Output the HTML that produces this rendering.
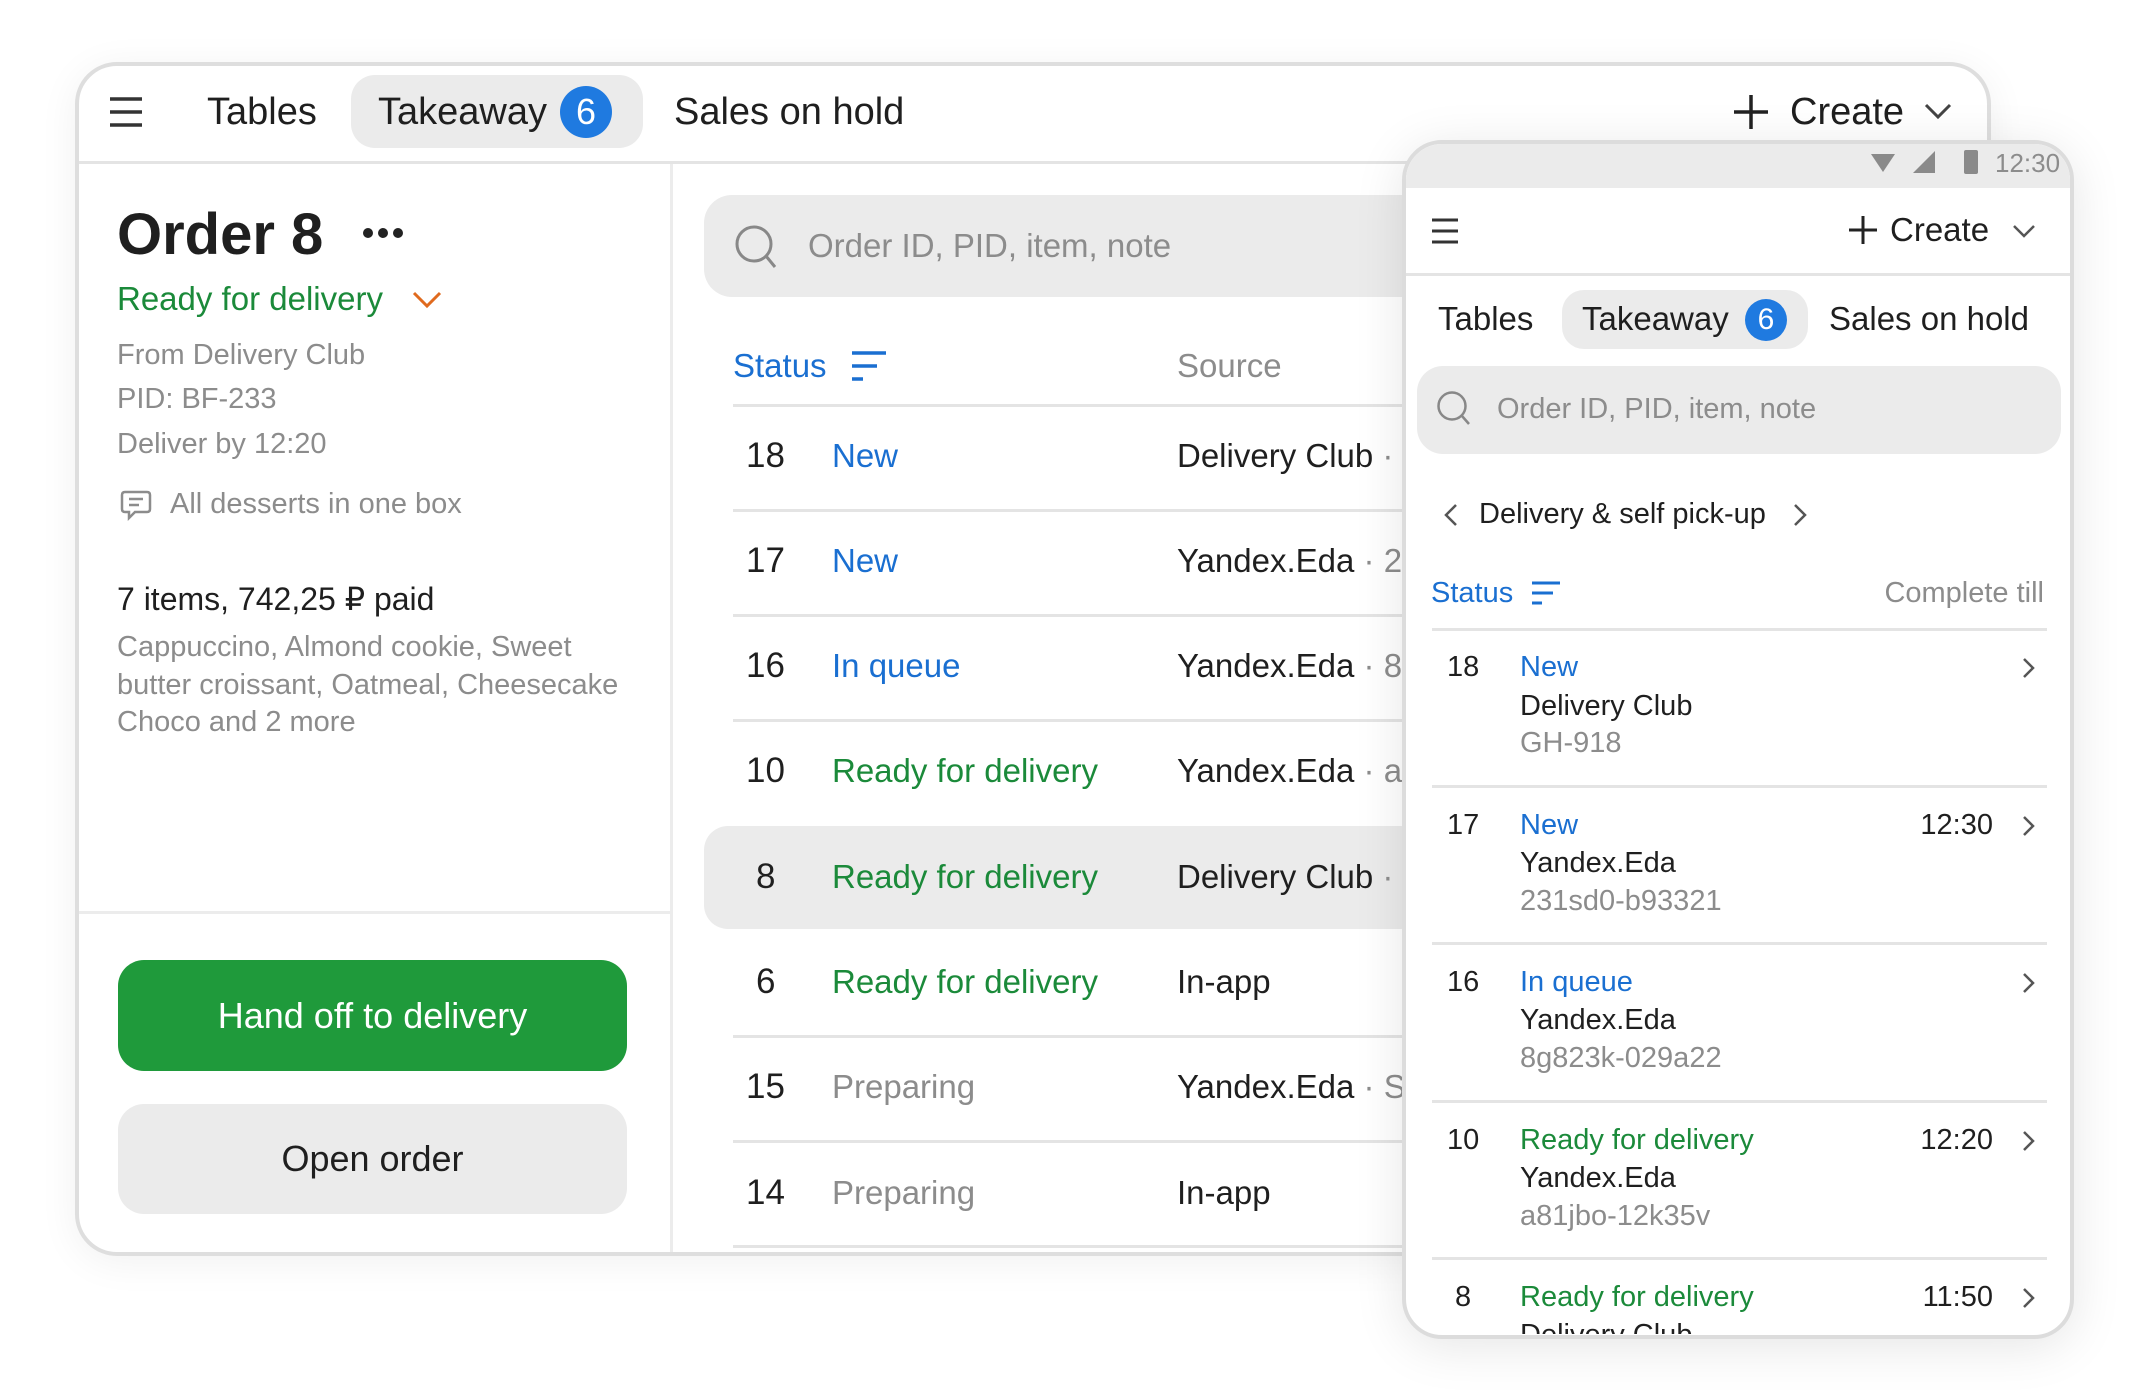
<!DOCTYPE html>
<html><head><meta charset="utf-8">
<style>
*{margin:0;padding:0;box-sizing:border-box}
body{width:2136px;height:1392px;background:#fff;position:relative;overflow:hidden;font-family:"Liberation Sans",sans-serif;color:#1f1f1f}
.a{position:absolute;white-space:nowrap}
.t{position:absolute;white-space:nowrap;height:60px;line-height:60px}
.blue{color:#1a6fd1}.green{color:#1b8a3a}.gray{color:#8c8c8c}
.line{position:absolute;height:3px;background:#e4e4e4}
</style></head><body>

<div class="a" style="left:75px;top:62px;width:1916px;height:1194px;border:4px solid #dedede;border-radius:42px;background:#fff;box-shadow:0 6px 40px rgba(0,0,0,0.06);overflow:hidden">
</div>
<div class="line" style="left:79px;top:161px;width:1908px"></div>
<div class="a" style="left:670px;top:164px;width:3px;height:1088px;background:#ececec"></div>
<div class="line" style="left:79px;top:911px;width:591px;background:#ececec"></div>

<svg class="a" style="left:108px;top:96px" width="36" height="32" viewBox="0 0 36 32"><path d="M2 3H34M2 16H34M2 29H34" stroke="#333" stroke-width="3.5"/></svg>
<div class="t" style="left:207px;top:82px;font-size:38px">Tables</div>
<div class="a" style="left:351px;top:75px;width:292px;height:73px;border-radius:24px;background:#ebebeb"></div>
<div class="t" style="left:378px;top:82px;font-size:38px">Takeaway</div>
<div class="a" style="left:560px;top:86px;width:52px;height:52px;border-radius:50%;background:#1f7ae0;color:#fff;font-size:36px;text-align:center;line-height:52px">6</div>
<div class="t" style="left:674px;top:82px;font-size:38px">Sales on hold</div>
<svg class="a" style="left:1732px;top:93px" width="38" height="38"><path d="M19 2V36M2 19H36" stroke="#222" stroke-width="3.5"/></svg>
<div class="t" style="left:1790px;top:82px;font-size:38px">Create</div>
<svg class="a" style="left:1924px;top:102px" width="28" height="18"><path d="M2 3L14 15L26 3" stroke="#444" stroke-width="3" fill="none"/></svg>

<div class="t" style="left:117px;top:203px;font-size:58px;font-weight:bold;height:64px;line-height:64px">Order 8</div>
<div class="a" style="left:363px;top:228px;width:40px;height:10px">
 <span class="a" style="left:0;top:0;width:10px;height:10px;border-radius:50%;background:#222"></span>
 <span class="a" style="left:15px;top:0;width:10px;height:10px;border-radius:50%;background:#222"></span>
 <span class="a" style="left:30px;top:0;width:10px;height:10px;border-radius:50%;background:#222"></span>
</div>
<div class="t green" style="left:117px;top:269px;font-size:33px">Ready for delivery</div>
<svg class="a" style="left:412px;top:290px" width="30" height="20"><path d="M2 3L15 16L28 3" stroke="#e06a1e" stroke-width="3" fill="none"/></svg>
<div class="t gray" style="left:117px;top:325px;font-size:29px">From Delivery Club</div>
<div class="t gray" style="left:117px;top:369px;font-size:29px">PID: BF-233</div>
<div class="t gray" style="left:117px;top:414px;font-size:29px">Deliver by 12:20</div>
<svg class="a" style="left:120px;top:489px" width="32" height="32" viewBox="0 0 32 32"><path d="M5 3H27Q30 3 30 6V20Q30 23 27 23H15L9 29V23H5Q2 23 2 20V6Q2 3 5 3Z M9 10H23M9 16H19" stroke="#8c8c8c" stroke-width="2.5" fill="none"/></svg>
<div class="t gray" style="left:170px;top:474px;font-size:29px">All desserts in one box</div>
<div class="t" style="left:117px;top:569px;font-size:32px">7 items, 742,25 ₽ paid</div>
<div class="t gray" style="left:117px;top:617px;font-size:29px">Cappuccino, Almond cookie, Sweet</div>
<div class="t gray" style="left:117px;top:655px;font-size:29px">butter croissant, Oatmeal, Cheesecake</div>
<div class="t gray" style="left:117px;top:692px;font-size:29px">Choco and 2 more</div>
<div class="a" style="left:118px;top:960px;width:509px;height:111px;border-radius:26px;background:#1f9a3b;color:#fff;font-size:36px;text-align:center;line-height:111px">Hand off to delivery</div>
<div class="a" style="left:118px;top:1104px;width:509px;height:110px;border-radius:26px;background:#ebebeb;color:#1f1f1f;font-size:36px;text-align:center;line-height:110px">Open order</div>

<div class="a" style="left:704px;top:195px;width:760px;height:102px;border-radius:28px;background:#ebebeb"></div>
<svg class="a" style="left:734px;top:224px" width="44" height="46"><circle cx="20" cy="20" r="17" stroke="#888" stroke-width="3" fill="none"/><path d="M32 32L41 43" stroke="#888" stroke-width="3"/></svg>
<div class="t gray" style="left:808px;top:216px;font-size:33px">Order ID, PID, item, note</div>
<div class="t blue" style="left:733px;top:336px;font-size:33px">Status</div>
<svg class="a" style="left:851px;top:350px" width="36" height="34"><path d="M1 3H35M1 16H26M1 29H12" stroke="#1a6fd1" stroke-width="3.5"/></svg>
<div class="t gray" style="left:1177px;top:336px;font-size:33px">Source</div>
<div class="line" style="left:733px;top:404px;width:700px"></div>

<div class="a" style="left:704px;top:826px;width:720px;height:103px;border-radius:24px;background:#ebebeb"></div>

<div class="t" style="left:746px;top:426px;font-size:35px">18</div><div class="t blue" style="left:832px;top:426px;font-size:33px">New</div><div class="t" style="left:1177px;top:426px;font-size:33px">Delivery Club <span class="gray">· </span></div>
<div class="line" style="left:733px;top:509px;width:700px"></div>
<div class="t" style="left:746px;top:531px;font-size:35px">17</div><div class="t blue" style="left:832px;top:531px;font-size:33px">New</div><div class="t" style="left:1177px;top:531px;font-size:33px">Yandex.Eda <span class="gray">· 2</span></div>
<div class="line" style="left:733px;top:614px;width:700px"></div>
<div class="t" style="left:746px;top:636px;font-size:35px">16</div><div class="t blue" style="left:832px;top:636px;font-size:33px">In queue</div><div class="t" style="left:1177px;top:636px;font-size:33px">Yandex.Eda <span class="gray">· 8</span></div>
<div class="line" style="left:733px;top:719px;width:700px"></div>
<div class="t" style="left:746px;top:741px;font-size:35px">10</div><div class="t green" style="left:832px;top:741px;font-size:33px">Ready for delivery</div><div class="t" style="left:1177px;top:741px;font-size:33px">Yandex.Eda <span class="gray">· a</span></div>
<div class="t" style="left:756px;top:847px;font-size:35px">8</div><div class="t green" style="left:832px;top:847px;font-size:33px">Ready for delivery</div><div class="t" style="left:1177px;top:847px;font-size:33px">Delivery Club <span class="gray">·</span></div>
<div class="t" style="left:756px;top:952px;font-size:35px">6</div><div class="t green" style="left:832px;top:952px;font-size:33px">Ready for delivery</div><div class="t" style="left:1177px;top:952px;font-size:33px">In-app</div>
<div class="line" style="left:733px;top:1035px;width:700px"></div>
<div class="t" style="left:746px;top:1057px;font-size:35px">15</div><div class="t gray" style="left:832px;top:1057px;font-size:33px">Preparing</div><div class="t" style="left:1177px;top:1057px;font-size:33px">Yandex.Eda <span class="gray">· S</span></div>
<div class="line" style="left:733px;top:1140px;width:700px"></div>
<div class="t" style="left:746px;top:1163px;font-size:35px">14</div><div class="t gray" style="left:832px;top:1163px;font-size:33px">Preparing</div><div class="t" style="left:1177px;top:1163px;font-size:33px">In-app</div>
<div class="line" style="left:733px;top:1245px;width:700px"></div>

<div class="a" style="left:1402px;top:140px;width:672px;height:1199px;border:4px solid #dcdcdc;border-radius:40px;background:#fff;box-shadow:0 8px 50px rgba(0,0,0,0.10);overflow:hidden">
 <div class="a" style="left:0;top:0;width:100%;height:44px;background:#ebebeb"></div>
</div>
<svg class="a" style="left:1870px;top:152px" width="26" height="22"><path d="M1 2H25L13 20Z" fill="#8a8a8a"/></svg>
<svg class="a" style="left:1912px;top:150px" width="24" height="24"><path d="M23 1V23H1Z" fill="#8a8a8a"/></svg>
<div class="a" style="left:1964px;top:150px;width:14px;height:24px;background:#8a8a8a;border-radius:2px"></div>
<div class="t gray" style="left:1995px;top:133px;font-size:26px">12:30</div>

<svg class="a" style="left:1431px;top:218px" width="28" height="26"><path d="M1 2H27M1 13H27M1 24H27" stroke="#333" stroke-width="3"/></svg>
<svg class="a" style="left:1848px;top:215px" width="30" height="30"><path d="M15 1V29M1 15H29" stroke="#222" stroke-width="3"/></svg>
<div class="t" style="left:1890px;top:200px;font-size:33px">Create</div>
<svg class="a" style="left:2012px;top:224px" width="24" height="14"><path d="M2 2L12 12L22 2" stroke="#555" stroke-width="2.5" fill="none"/></svg>
<div class="line" style="left:1406px;top:273px;width:664px"></div>

<div class="t" style="left:1438px;top:289px;font-size:33px">Tables</div>
<div class="a" style="left:1562px;top:290px;width:246px;height:59px;border-radius:22px;background:#ebebeb"></div>
<div class="t" style="left:1582px;top:289px;font-size:33px">Takeaway</div>
<div class="a" style="left:1745px;top:299px;width:42px;height:42px;border-radius:50%;background:#1f7ae0;color:#fff;font-size:30px;text-align:center;line-height:42px">6</div>
<div class="t" style="left:1829px;top:289px;font-size:33px">Sales on hold</div>

<div class="a" style="left:1417px;top:366px;width:644px;height:88px;border-radius:26px;background:#ebebeb"></div>
<svg class="a" style="left:1436px;top:390px" width="36" height="38"><circle cx="16" cy="16" r="13.5" stroke="#888" stroke-width="2.5" fill="none"/><path d="M26 26L33 34" stroke="#888" stroke-width="2.5"/></svg>
<div class="t gray" style="left:1497px;top:379px;font-size:29px">Order ID, PID, item, note</div>

<svg class="a" style="left:1443px;top:503px" width="16" height="24"><path d="M13 2L3 12L13 22" stroke="#555" stroke-width="2.5" fill="none"/></svg>
<div class="t" style="left:1479px;top:484px;font-size:29px">Delivery &amp; self pick-up</div>
<svg class="a" style="left:1792px;top:503px" width="16" height="24"><path d="M3 2L13 12L3 22" stroke="#555" stroke-width="2.5" fill="none"/></svg>

<div class="t blue" style="left:1431px;top:563px;font-size:29px">Status</div>
<svg class="a" style="left:1531px;top:580px" width="30" height="28"><path d="M1 3H29M1 13H22M1 23H11" stroke="#1a6fd1" stroke-width="3"/></svg>
<div class="t gray" style="left:1700px;top:563px;font-size:29px;width:344px;text-align:right">Complete till</div>
<div class="line" style="left:1432px;top:628px;width:615px"></div>

<div class="t" style="left:1447px;top:637px;font-size:29px">18</div>
<div class="t blue" style="left:1520px;top:637px;font-size:29px">New</div>
<div class="t" style="left:1520px;top:676px;font-size:29px">Delivery Club</div>
<div class="t gray" style="left:1520px;top:713px;font-size:29px">GH-918</div>
<svg class="a" style="left:2022px;top:657px" width="14" height="22"><path d="M2 2L11 11L2 20" stroke="#555" stroke-width="2.5" fill="none"/></svg>
<div class="line" style="left:1432px;top:785px;width:615px"></div>

<div class="t" style="left:1447px;top:795px;font-size:29px">17</div>
<div class="t blue" style="left:1520px;top:795px;font-size:29px">New</div>
<div class="t" style="left:1900px;top:795px;font-size:29px;width:93px;text-align:right">12:30</div>
<div class="t" style="left:1520px;top:833px;font-size:29px">Yandex.Eda</div>
<div class="t gray" style="left:1520px;top:871px;font-size:29px">231sd0-b93321</div>
<svg class="a" style="left:2022px;top:815px" width="14" height="22"><path d="M2 2L11 11L2 20" stroke="#555" stroke-width="2.5" fill="none"/></svg>
<div class="line" style="left:1432px;top:942px;width:615px"></div>

<div class="t" style="left:1447px;top:952px;font-size:29px">16</div>
<div class="t blue" style="left:1520px;top:952px;font-size:29px">In queue</div>
<div class="t" style="left:1520px;top:990px;font-size:29px">Yandex.Eda</div>
<div class="t gray" style="left:1520px;top:1028px;font-size:29px">8g823k-029a22</div>
<svg class="a" style="left:2022px;top:972px" width="14" height="22"><path d="M2 2L11 11L2 20" stroke="#555" stroke-width="2.5" fill="none"/></svg>
<div class="line" style="left:1432px;top:1100px;width:615px"></div>

<div class="t" style="left:1447px;top:1110px;font-size:29px">10</div>
<div class="t green" style="left:1520px;top:1110px;font-size:29px">Ready for delivery</div>
<div class="t" style="left:1900px;top:1110px;font-size:29px;width:93px;text-align:right">12:20</div>
<div class="t" style="left:1520px;top:1148px;font-size:29px">Yandex.Eda</div>
<div class="t gray" style="left:1520px;top:1186px;font-size:29px">a81jbo-12k35v</div>
<svg class="a" style="left:2022px;top:1130px" width="14" height="22"><path d="M2 2L11 11L2 20" stroke="#555" stroke-width="2.5" fill="none"/></svg>
<div class="line" style="left:1432px;top:1257px;width:615px"></div>

<div class="a" style="left:1406px;top:1262px;width:664px;height:72px;overflow:hidden">
 <div class="t" style="left:49px;top:5px;font-size:29px">8</div>
 <div class="t green" style="left:114px;top:5px;font-size:29px">Ready for delivery</div>
 <div class="t" style="left:494px;top:5px;font-size:29px;width:93px;text-align:right">11:50</div>
 <div class="t" style="left:114px;top:43px;font-size:29px">Delivery Club</div>
 <svg class="a" style="left:616px;top:25px" width="14" height="22"><path d="M2 2L11 11L2 20" stroke="#555" stroke-width="2.5" fill="none"/></svg>
</div>

</body></html>
